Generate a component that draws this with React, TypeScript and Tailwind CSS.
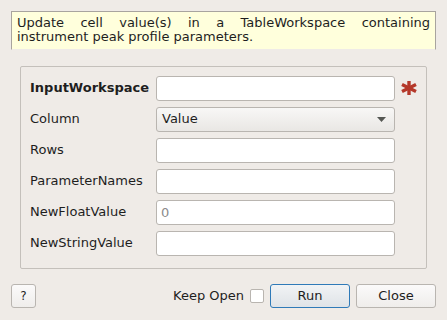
import React, { useState } from "react";

const rows = [
  { label: "InputWorkspace", bold: true, kind: "text", value: "", required: true },
  { label: "Column", kind: "combo", value: "Value" },
  { label: "Rows", kind: "text", value: "" },
  { label: "ParameterNames", kind: "text", value: "" },
  { label: "NewFloatValue", kind: "text", value: "", placeholder: "0" },
  { label: "NewStringValue", kind: "text", value: "" },
];

export default function App() {
  const [keepOpen, setKeepOpen] = useState(false);

  return (
    <div
      className="w-[447px] h-[320px] bg-[#efebe7] text-[13px] text-[#1e1e1e] overflow-hidden"
      style={{ fontFamily: '"DejaVu Sans", sans-serif' }}
    >
      <div className="pt-[11px] px-[11px]">
        <div className="h-[39px] bg-[#ffffdc] border border-[#a8a49f] border-b-[#efebe7] px-[5px] pt-[4px] leading-[14px] text-justify [text-align-last:left]">
          Update cell value(s) in a TableWorkspace containing instrument peak profile parameters.
        </div>
      </div>

      <div className="mt-[16px] ml-[20px] w-[407px] h-[203px] border border-[#c4c0bb] rounded-[2px] pl-[9px] pt-[9px] flex flex-col gap-[7px]">
        {rows.map((r) => (
          <div key={r.label} className="flex items-center h-[24px]">
            <div className={"w-[126px] " + (r.bold ? "font-bold" : "")}>{r.label}</div>
            {r.kind === "combo" ? (
              <div className="w-[239px] h-[25px] rounded-[3px] border border-[#b9b5b0] bg-gradient-to-b from-[#f8f7f6] to-[#e9e7e4] flex items-center justify-between pl-[5px] pr-[8px]">
                <span>{r.value}</span>
                <svg width="9" height="5" viewBox="0 0 9 5">
                  <path d="M0 0 L9 0 L4.5 5 Z" fill="#555753" />
                </svg>
              </div>
            ) : (
              <input
                className="w-[239px] h-[25px] rounded-[3px] border border-[#b9b5b0] bg-white px-[4px] outline-none placeholder:text-[#8b8b8b]"
                defaultValue={r.value}
                placeholder={r.placeholder}
              />
            )}
            {r.required && (
              <svg className="ml-[6px]" width="16" height="14" viewBox="0 0 16 14">
                <g stroke="#b5382a" strokeWidth="3.4" strokeLinecap="butt">
                  <line x1="8" y1="0" x2="8" y2="14" />
                  <line x1="1" y1="3.5" x2="15" y2="10.5" />
                  <line x1="1" y1="10.5" x2="15" y2="3.5" />
                </g>
              </svg>
            )}
          </div>
        ))}
      </div>

      <div className="mt-[15px] px-[11px] flex items-center h-[24px]">
        <button className="w-[25px] h-[24px] rounded-[3px] border border-[#b9b5b0] bg-gradient-to-b from-[#fbfafa] to-[#efedeb] text-[12px]">
          ?
        </button>
        <div className="flex-1" />
        <span>Keep Open</span>
        <button
          onClick={() => setKeepOpen(!keepOpen)}
          className="ml-[6px] w-[14px] h-[14px] border border-[#b9b5b0] bg-white rounded-[2px]"
        />
        <button className="ml-[6px] w-[80px] h-[24px] rounded-[3px] border border-[#2f7ab8] bg-gradient-to-b from-[#f1f3f5] to-[#dfe3e7]">
          Run
        </button>
        <button className="ml-[6px] w-[80px] h-[24px] rounded-[3px] border border-[#b9b5b0] bg-gradient-to-b from-[#fbfafa] to-[#efedeb]">
          Close
        </button>
      </div>
    </div>
  );
}
